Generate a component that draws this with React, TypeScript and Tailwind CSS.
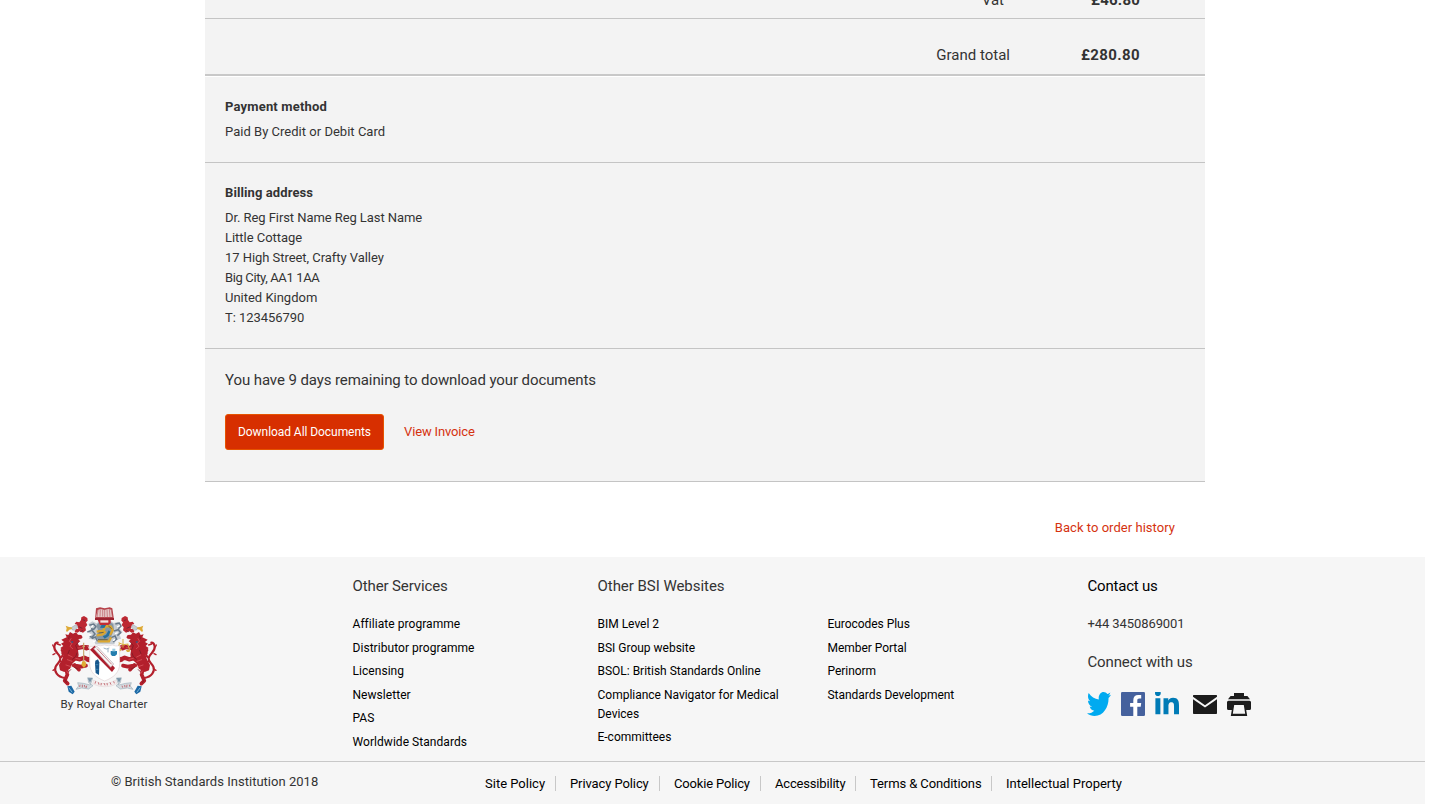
import React from "react";
import { FaTwitter, FaLinkedinIn } from "react-icons/fa";

const services = [
  "Affiliate programme",
  "Distributor programme",
  "Licensing",
  "Newsletter",
  "PAS",
  "Worldwide Standards",
];
const websites = [
  "BIM Level 2",
  "BSI Group website",
  "BSOL: British Standards Online",
  "Compliance Navigator for Medical Devices",
  "E-committees",
];
const moreWebsites = ["Eurocodes Plus", "Member Portal", "Perinorm", "Standards Development"];
const address = [
  { text: "Dr. Reg First Name Reg Last Name", tracking: "tracking-[-0.07px]" },
  { text: "Little Cottage", tracking: "tracking-[-0.03px]" },
  { text: "17 High Street, Crafty Valley", tracking: "tracking-[-0.05px]" },
  { text: "Big City, AA1 1AA", tracking: "tracking-[-0.37px]" },
  { text: "United Kingdom", tracking: "tracking-[-0.01px]" },
  { text: "T: 123456790", tracking: "tracking-[-0.05px]" },
];
const policies = [
  { label: "Site Policy", width: "w-[71px]" },
  { label: "Privacy Policy", width: "w-[90px] tracking-[-0.1px]" },
  { label: "Cookie Policy", width: "w-[87px] tracking-[-0.17px]" },
  { label: "Accessibility", width: "w-[81px] tracking-[-0.18px]" },
  { label: "Terms & Conditions", width: "w-[122px] tracking-[-0.1px]" },
  { label: "Intellectual Property", width: "w-[120px]" },
];

function LinkList({ items, className }: { items: string[]; className: string }) {
  return (
    <ul className={`flex flex-col gap-[4.6px] text-[12px] leading-[19px] text-black ${className}`}>
      {items.map((item) => (
        <li key={item}>
          <a href="#">{item}</a>
        </li>
      ))}
    </ul>
  );
}

/* One red supporter of the crest, facing right; mirrored for the other side. */
function Lion() {
  return (
    <g strokeLinecap="round" strokeLinejoin="round">
      <path
        d="M74 234c-22-3-33-20-27-34 5-11 16-14 14-26-2-14-20-17-18-34 1-9 6-12 10-12M61 174c8-6 10-16 4-24"
        fill="none"
        stroke="#b3202c"
        strokeWidth="6.5"
      />
      <path d="M41 141l-3-6M45 161l-6 3M59 184l8 2M45 207l-6 4M52 132l9 3" stroke="#b3202c" strokeWidth="4" />
      <path
        d="M80 112l-4-9 9 2 5-9 9 5 9-4 6 7 10 1 4 7-4 4-8 1 5 7-8 5 4 8-3 13 2 15-4 12-14 13-8 16-17 10-13-5-3-16 10-19 3-12-7-4 6-9-8-7 9-6-7-7 9-5-8-7z"
        fill="#b3202c"
      />
      <path d="M114 144l15-3 10 4M108 175l12 3 13-5 10 5" fill="none" stroke="#b3202c" strokeWidth="13" />
      <path d="M136 137l9 1M139 145l8 3M138 172l9 1M139 182l8 3" stroke="#b3202c" strokeWidth="4" />
      <path
        d="M79 207l3 17-8 18 9 9M101 196l23 4 14-3M104 195l13 14"
        fill="none"
        stroke="#b3202c"
        strokeWidth="11"
      />
      <path
        d="M93 116l-5 8 8 6-6 9 8 7M85 165l12 6M82 179l14 5M78 195l15 5M114 144l13-1M107 175l13 3M80 213l6 9"
        fill="none"
        stroke="#d6535b"
        strokeWidth="2.5"
      />
      <path
        d="M88 108l-2 8M115 127l-8 10 5 12M88 151l-4 10M111 159l-4 11-10 8M92 209l-6 6M75 240l4 7M103 202l10 5"
        fill="none"
        stroke="#7d1a27"
        strokeWidth="2.5"
      />
      <path d="M94 123l6 1-1 5-5-1z" fill="#445078" />
      <path d="M115 117l8 1-4 4z" fill="#f3d5d2" />
      <path d="M82 259l12-2 10 18-6 8-12-8z" fill="#1b67a4" />
      <path d="M87 264l9 12" stroke="#77b5d8" strokeWidth="3" />
    </g>
  );
}

/* Smaller demi-lion holding a gold bell beside the helmet. */
function DemiLion() {
  return (
    <g>
      <path
        d="M124 52l8-4 10 6 1 8-5 5 4 8-6 7 2 9-9 7-10-4-7 4-8-3 3-7 8-2-4-12-7-3 5-6 9 2 5-7z"
        fill="#bd2832"
      />
      <path d="M128 59l7 3M116 80l11 5M129 91l-8 4" stroke="#7d2635" strokeWidth="3" />
      <path d="M95 82l13-8 5 8-10 9-7-2z" fill="#c9ced2" stroke="#939ba5" strokeWidth="1.5" />
      <path d="M77 77l10 4 8 1 1 5-8 2-6 6-4-1 2-9z" fill="#dea934" />
    </g>
  );
}

function Crest() {
  return (
    <svg viewBox="0 0 390 294" width="130" height="98" aria-label="Royal coat of arms">
      <path
        d="M145 72l12-8 13 6 10-8 29-1 12 8 14-4 10 11-7 9 10 11-9 8 4 12-15 4-5 13h-57l-4-14-16-3 8-11-9-9 8-10z"
        fill="#c6ccd2"
      />
      <path
        d="M148 76l13-4 7 8-7 8-8-2M142 96l14-5 9 11-9 10-7-3M155 116l11-5 7 13M226 72l12-3 5 9-8 8M222 93l13-4 7 9-10 9M213 113l12-5 5 10-11 8"
        fill="none"
        stroke="#68798a"
        strokeWidth="4.5"
      />
      <path
        d="M154 82l5-6M147 105l8-3M231 81l8-4M225 101l8-3M160 126l7-5M219 122l6-4"
        stroke="#fff"
        strokeWidth="4"
      />
      <DemiLion />
      <g transform="translate(387 0) scale(-1 1)">
        <DemiLion />
      </g>
      <Lion />
      <g transform="translate(387 0) scale(-1 1)">
        <Lion />
      </g>
      <path d="M181 62h24l15 10 2 17-9 22-8 16h-26l-12-17 8-16-6-18z" fill="#8797a4" />
      <path
        d="M170 95l20-3 6-14M196 78l16 2 6 11-8 14M170 106l18-3 9-9M173 124h34l6-12"
        fill="none"
        stroke="#dca72f"
        strokeWidth="7"
      />
      <path d="M186 72l12 3-5 9-13-1zM188 108l10-3 8-14 5 4-5 13-12 8z" fill="#27709e" />
      <path d="M176 99l15-2M205 78l10 8M174 119h29" stroke="#695933" strokeWidth="2.5" />
      <path d="M168 25l12-3 14 3 15-3 8 3 5 34h-57z" fill="#b6424a" />
      <path d="M173 30l9-3 11 3 12-3 9 2 3 22h-49z" fill="#e6cac9" />
      <path
        d="M174 30l-3 21M181 28l-1 22M188 29v21M194 28v26M201 29l1 22M208 28l2 23M214 30l3 20"
        stroke="#b95c63"
        strokeWidth="2"
      />
      <path d="M165 54h57v6h-57z" fill="#9c2330" />
      <path d="M173 60h39v10l-7 5h-25z" fill="#c32d35" />
      <path d="M181 61h24v7h-24z" fill="#efe0df" />
      <path
        d="M236 128l13 6 16-2M238 130l-3 16M263 132l6 17M249 117v26"
        stroke="#d9ad3e"
        strokeWidth="3"
        fill="none"
      />
      <path d="M231 147h15l-5 7h-7zM257 149h15l-4 7h-7z" fill="#d9ad3e" />
      <path d="M131 128v57M127 139h8" stroke="#c7a26b" strokeWidth="3.5" />
      <path d="M127 184h9l3 11-7 9-8-9z" fill="#e0ad35" />
      <path
        d="M149 139q11 2 20-4 11 5 24 0 15 5 24 0 10 5 22 2v53c0 27-17 42-45 53-28-11-45-27-45-54z"
        fill="#fff"
        stroke="#d8c4c7"
        strokeWidth="1.5"
      />
      <path d="M150 149l14-12 61 67-9 12z" fill="#ad1e2d" />
      <path d="M161 146l10-7 50 53-9 10z" fill="#f7f5f5" stroke="#b8a7ae" strokeWidth="2" />
      <path d="M171 146l44 47" stroke="#ad4450" strokeWidth="2" />
      <path d="M166 182l8-4 4 9-1 38-10-6-2-28z" fill="#17578c" />
      <path d="M166 194h9M166 208h9" stroke="#4b9cc6" strokeWidth="2" />
      <path d="M212 153h19v10l-6 5h-9l-4-5z" fill="#247eae" />
      <path d="M217 146h9v8h-9z" fill="#9bcce1" />
      <path d="M191 144l8 3 9-3M204 147v10" stroke="#668aa4" strokeWidth="2" fill="none" />
      <path
        d="M113 248l17 2 21 5 7-21-15-1 3 15 13 9-13 10-21-3-17 4 8-10zM274 248l-17 2-21 5-7-21 15-1-3 15-13 9 13 10 21-3 17 4-8-10z"
        fill="#d5dce0"
        stroke="#8b9eac"
        strokeWidth="1.5"
      />
      <path d="M143 235l14-1-7 14zM244 235l-14-1 7 14z" fill="#7894a8" />
      <path d="M161 240q32 22 66 0l3 12q-34 17-72 0z" fill="#f4eeee" stroke="#d6c1c4" strokeWidth="1" />
      <path
        d="M120 254l-1 7M127 254v8M133 255l2 7M140 257l-2 7M167 244l-2 7M175 247l2 7M184 249l-1 7M192 249l3 7M201 249l1 7M210 247l3 7M221 244l2 6M246 257l2 6M254 255l1 7M261 254l-1 8M268 254l1 6"
        stroke="#bd5b65"
        strokeWidth="2.5"
      />
    </svg>
  );
}

function FacebookIcon() {
  return (
    <svg width="24" height="24" viewBox="0 0 24 24">
      <rect width="24" height="24" rx="1.2" fill="#45619d" />
      <path
        d="M12.3 24v-9.3H9.1v-3.8h3.2V8.2c0-3.3 1.9-5.1 4.9-5.1h3v3.5h-1.9c-1.6 0-2 .8-2 2v2.3h3.9l-.5 3.8h-3.4V24z"
        fill="#fff"
      />
    </svg>
  );
}

function MailIcon() {
  return (
    <svg width="24" height="19" viewBox="0 0 24 19">
      <path d="M.6 0h22.8q.6 0 .6.6v1.2L12 10.2 0 1.8V.6Q0 0 .6 0z" fill="#1c1c1c" />
      <path d="M0 4.200l12 8.200 12-8.200v14q0 .8-.8.8H.8q-.8 0-.8-.8z" fill="#1c1c1c" />
    </svg>
  );
}

function PrintIcon() {
  return (
    <svg width="24" height="23" viewBox="0 0 24 23">
      <path d="M7 0h10v3h3.400l2.600 3.200H1L3.600 3H7z" fill="#1c1c1c" />
      <path
        fillRule="evenodd"
        d="M1.500 7.700h21q1.500 0 1.500 1.500v6.300q0 1.500-1.500 1.500h-3.300l1 6H3.800l1-6H1.500Q0 17 0 15.500V9.200q0-1.500 1.500-1.500zM7.200 12L5.800 20.800h12.400L16.800 12z"
        fill="#1c1c1c"
      />
    </svg>
  );
}

export default function App() {
  return (
    <div className="h-[805px] overflow-hidden bg-white font-['Roboto',sans-serif] text-[13px] leading-5 text-[#333]">
      <main className="ml-[205px] flex h-[557px] w-[1000px] flex-col">
        <div className="bg-[#f3f3f3]">
          <div className="flex h-[19px] items-end justify-end border-b border-[#c4c4c4] pr-[65px] pb-2 text-[15px]">
            <span className="mr-[6px]">Vat</span>
            <strong className="w-[130px] text-right font-bold tracking-[0.2px]">£46.80</strong>
          </div>
          <div className="flex h-[57px] items-end justify-end border-b-2 border-[#c8c8c8] pr-[65px] pb-[9px] text-[15px]">
            <span>Grand total</span>
            <strong className="w-[130px] text-right font-bold tracking-[0.39px]">£280.80</strong>
          </div>
          <section className="h-[87px] border-t border-b border-t-white border-b-[#c4c4c4] px-5 pt-5">
            <h2 className="mb-[5px] font-bold tracking-[0.18px]">Payment method</h2>
            <p className="tracking-[0.02px]">Paid By Credit or Debit Card</p>
          </section>
          <section className="h-[186px] border-b border-[#c4c4c4] px-5 pt-5">
            <h2 className="mb-[5px] font-bold tracking-[0.1px]">Billing address</h2>
            {address.map(({ text, tracking }) => (
              <p key={text} className={tracking}>
                {text}
              </p>
            ))}
          </section>
          <section className="h-[133px] border-b border-[#c4c4c4] px-5 pt-[21px]">
            <p className="text-[15px] tracking-[-0.09px]">You have 9 days remaining to download your documents</p>
            <div className="mt-6 flex items-center gap-5">
              <button className="h-9 w-[159px] rounded-[3px] border border-[#e65300] bg-[#d72f00] text-[12px] tracking-[-0.06px] whitespace-nowrap text-white">
                Download All Documents
              </button>
              <a href="#" className="tracking-[-0.15px] text-[#d5320f]">
                View Invoice
              </a>
            </div>
          </section>
        </div>
        <div className="flex justify-end pt-9 pr-[30px]">
          <a href="#" className="tracking-[0.04px] text-[#d5320f]">
            Back to order history
          </a>
        </div>
      </main>

      <footer className="h-[247px] w-[1425px] bg-[#f6f6f6]">
        <div className="flex h-[205px] border-b border-[#c8c8c8]">
          <div className="w-[352.500px] pt-[43px] pl-10">
            <div className="flex w-[130px] flex-col items-center">
              <Crest />
              <p className="mt-[-4px] mr-[2px] text-[11.5px] tracking-[0.17px]">By Royal Charter</p>
            </div>
          </div>
          <section className="w-[245px] pt-[19px]">
            <h3 className="mb-[19px] text-[15px] tracking-[-0.12px]">Other Services</h3>
            <LinkList items={services} className="tracking-[0.05px]" />
          </section>
          <section className="w-[490px] pt-[19px]">
            <h3 className="mb-[19px] text-[15px] tracking-[-0.04px]">Other BSI Websites</h3>
            <div className="flex">
              <LinkList items={websites} className="w-[230px] pr-[40px] tracking-[-0.01px]" />
              <LinkList items={moreWebsites} className="tracking-[-0.04px]" />
            </div>
          </section>
          <section className="pt-[19px]">
            <h3 className="text-[15px] tracking-[-0.2px] text-black">Contact us</h3>
            <p className="mt-[18px] tracking-[-0.09px]">+44 3450869001</p>
            <h3 className="mt-[18px] text-[15px] tracking-[-0.14px]">Connect with us</h3>
            <div className="-ml-[0.5px] mt-5 flex h-6 items-center">
              <FaTwitter
                viewBox="0 48 512 416"
                preserveAspectRatio="none"
                className="mr-[10px] h-6 w-6 fill-[#00aaf0]"
              />
              <FacebookIcon />
              <FaLinkedinIn viewBox="0 32 448 448" className="mx-[10px] mr-[14px] h-6 w-6 fill-[#007bb6]" />
              <MailIcon />
              <span className="ml-[10px]">
                <PrintIcon />
              </span>
            </div>
          </section>
        </div>
        <div className="flex pl-[111px]">
          <p className="w-[374px] pt-[10px] tracking-[0.02px]">© British Standards Institution 2018</p>
          <nav className="flex gap-[14px] pt-[14px] text-black">
            {policies.map(({ label, width }) => (
              <a
                key={label}
                href="#"
                className={`h-[15px] border-r border-[#c8c8c8] leading-[15px] whitespace-nowrap last:border-r-0 ${width}`}
              >
                {label}
              </a>
            ))}
          </nav>
        </div>
      </footer>
    </div>
  );
}
